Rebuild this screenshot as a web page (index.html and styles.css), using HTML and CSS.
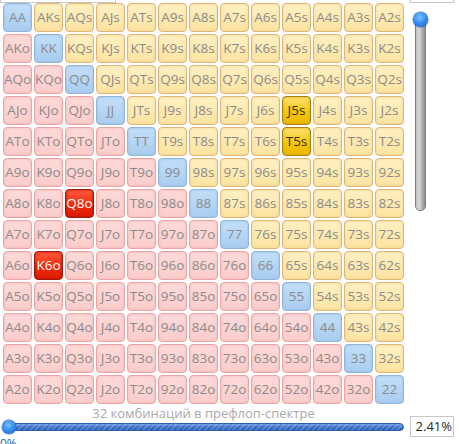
FILE: index.html
```html
<!DOCTYPE html>
<html>
<head>
<meta charset="utf-8">
<link rel="stylesheet" href="styles.css">
</head>
<body>
<div class="page">
  <div class="top">
    <div class="box box-left"></div>
    <div class="box box-right"></div>
  </div>
  <div class="main">
    <div class="grid">
      <div class="cell pair">AA</div><div class="cell suited">AKs</div><div class="cell suited">AQs</div><div class="cell suited">AJs</div><div class="cell suited">ATs</div><div class="cell suited">A9s</div><div class="cell suited">A8s</div><div class="cell suited">A7s</div><div class="cell suited">A6s</div><div class="cell suited">A5s</div><div class="cell suited">A4s</div><div class="cell suited">A3s</div><div class="cell suited">A2s</div>
      <div class="cell offsuit">AKo</div><div class="cell pair">KK</div><div class="cell suited">KQs</div><div class="cell suited">KJs</div><div class="cell suited">KTs</div><div class="cell suited">K9s</div><div class="cell suited">K8s</div><div class="cell suited">K7s</div><div class="cell suited">K6s</div><div class="cell suited">K5s</div><div class="cell suited">K4s</div><div class="cell suited">K3s</div><div class="cell suited">K2s</div>
      <div class="cell offsuit">AQo</div><div class="cell offsuit">KQo</div><div class="cell pair">QQ</div><div class="cell suited">QJs</div><div class="cell suited">QTs</div><div class="cell suited">Q9s</div><div class="cell suited">Q8s</div><div class="cell suited">Q7s</div><div class="cell suited">Q6s</div><div class="cell suited">Q5s</div><div class="cell suited">Q4s</div><div class="cell suited">Q3s</div><div class="cell suited">Q2s</div>
      <div class="cell offsuit">AJo</div><div class="cell offsuit">KJo</div><div class="cell offsuit">QJo</div><div class="cell pair">JJ</div><div class="cell suited">JTs</div><div class="cell suited">J9s</div><div class="cell suited">J8s</div><div class="cell suited">J7s</div><div class="cell suited">J6s</div><div class="cell suited-sel">J5s</div><div class="cell suited">J4s</div><div class="cell suited">J3s</div><div class="cell suited">J2s</div>
      <div class="cell offsuit">ATo</div><div class="cell offsuit">KTo</div><div class="cell offsuit">QTo</div><div class="cell offsuit">JTo</div><div class="cell pair">TT</div><div class="cell suited">T9s</div><div class="cell suited">T8s</div><div class="cell suited">T7s</div><div class="cell suited">T6s</div><div class="cell suited-sel">T5s</div><div class="cell suited">T4s</div><div class="cell suited">T3s</div><div class="cell suited">T2s</div>
      <div class="cell offsuit">A9o</div><div class="cell offsuit">K9o</div><div class="cell offsuit">Q9o</div><div class="cell offsuit">J9o</div><div class="cell offsuit">T9o</div><div class="cell pair">99</div><div class="cell suited">98s</div><div class="cell suited">97s</div><div class="cell suited">96s</div><div class="cell suited">95s</div><div class="cell suited">94s</div><div class="cell suited">93s</div><div class="cell suited">92s</div>
      <div class="cell offsuit">A8o</div><div class="cell offsuit">K8o</div><div class="cell offsuit-sel">Q8o</div><div class="cell offsuit">J8o</div><div class="cell offsuit">T8o</div><div class="cell offsuit">98o</div><div class="cell pair">88</div><div class="cell suited">87s</div><div class="cell suited">86s</div><div class="cell suited">85s</div><div class="cell suited">84s</div><div class="cell suited">83s</div><div class="cell suited">82s</div>
      <div class="cell offsuit">A7o</div><div class="cell offsuit">K7o</div><div class="cell offsuit">Q7o</div><div class="cell offsuit">J7o</div><div class="cell offsuit">T7o</div><div class="cell offsuit">97o</div><div class="cell offsuit">87o</div><div class="cell pair">77</div><div class="cell suited">76s</div><div class="cell suited">75s</div><div class="cell suited">74s</div><div class="cell suited">73s</div><div class="cell suited">72s</div>
      <div class="cell offsuit">A6o</div><div class="cell offsuit-sel">K6o</div><div class="cell offsuit">Q6o</div><div class="cell offsuit">J6o</div><div class="cell offsuit">T6o</div><div class="cell offsuit">96o</div><div class="cell offsuit">86o</div><div class="cell offsuit">76o</div><div class="cell pair">66</div><div class="cell suited">65s</div><div class="cell suited">64s</div><div class="cell suited">63s</div><div class="cell suited">62s</div>
      <div class="cell offsuit">A5o</div><div class="cell offsuit">K5o</div><div class="cell offsuit">Q5o</div><div class="cell offsuit">J5o</div><div class="cell offsuit">T5o</div><div class="cell offsuit">95o</div><div class="cell offsuit">85o</div><div class="cell offsuit">75o</div><div class="cell offsuit">65o</div><div class="cell pair">55</div><div class="cell suited">54s</div><div class="cell suited">53s</div><div class="cell suited">52s</div>
      <div class="cell offsuit">A4o</div><div class="cell offsuit">K4o</div><div class="cell offsuit">Q4o</div><div class="cell offsuit">J4o</div><div class="cell offsuit">T4o</div><div class="cell offsuit">94o</div><div class="cell offsuit">84o</div><div class="cell offsuit">74o</div><div class="cell offsuit">64o</div><div class="cell offsuit">54o</div><div class="cell pair">44</div><div class="cell suited">43s</div><div class="cell suited">42s</div>
      <div class="cell offsuit">A3o</div><div class="cell offsuit">K3o</div><div class="cell offsuit">Q3o</div><div class="cell offsuit">J3o</div><div class="cell offsuit">T3o</div><div class="cell offsuit">93o</div><div class="cell offsuit">83o</div><div class="cell offsuit">73o</div><div class="cell offsuit">63o</div><div class="cell offsuit">53o</div><div class="cell offsuit">43o</div><div class="cell pair">33</div><div class="cell suited">32s</div>
      <div class="cell offsuit">A2o</div><div class="cell offsuit">K2o</div><div class="cell offsuit">Q2o</div><div class="cell offsuit">J2o</div><div class="cell offsuit">T2o</div><div class="cell offsuit">92o</div><div class="cell offsuit">82o</div><div class="cell offsuit">72o</div><div class="cell offsuit">62o</div><div class="cell offsuit">52o</div><div class="cell offsuit">42o</div><div class="cell offsuit">32o</div><div class="cell pair">22</div>
    </div>
    <div class="vslider">
      <div class="vtrack"></div>
      <div class="vthumb"></div>
    </div>
  </div>
  <div class="bottom">
    <div class="bottom-left">
      <div class="caption">32 комбинаций в префлоп-спектре</div>
      <div class="hslider">
        <div class="htrack"></div>
        <div class="hthumb"></div>
      </div>
    </div>
    <div class="pct">2.41%</div>
  </div>
  <div class="zero">0%</div>
</div>
</body>
</html>
```
FILE: styles.css
```css
html, body {
  margin: 0;
  padding: 0;
  background: #ffffff;
  overflow: hidden;
}
.page {
  width: 459px;
  height: 444px;
  font-family: "Open Sans", "Noto Sans", sans-serif;
  display: flex;
  flex-direction: column;
}
.top {
  display: flex;
  height: 3px;
}
.box {
  box-sizing: border-box;
  height: 3px;
  border: 1px solid #c6c6c6;
  border-top: none;
  background: #fff;
}
.box-left {
  width: 116px;
}
.box-right {
  width: 44px;
  margin-left: 294px;
}
.main {
  display: flex;
  padding-left: 3px;
}
.grid {
  display: grid;
  grid-template-columns: repeat(13, 29px);
  grid-auto-rows: 29px;
  gap: 2px;
}
.cell {
  box-sizing: border-box;
  border-radius: 4px;
  border: 1px solid;
  font-size: 13.5px;
  line-height: 27px;
  text-align: center;
  color: #8b8b8b;
  white-space: nowrap;
}
.pair {
  background: linear-gradient(#c2dff8, #a9cdf0);
  border-color: #91b4d9;
  box-shadow: inset 0 0 3px #9cc2e8;
}
.suited {
  background: linear-gradient(#fff1c4, #fce3a0);
  border-color: #e0b57a;
  box-shadow: inset 0 0 3px #f3d48e;
}
.offsuit {
  background: linear-gradient(#fddad8, #fbcdcb);
  border-color: #eaa4a4;
  box-shadow: inset 0 0 3px #f3b8b8;
}
.suited-sel {
  background: linear-gradient(#fce372, #f3c40a 60%, #eab800);
  border-color: #a5820d;
  color: #3b3200;
  box-shadow: inset 0 0 3px #d9a800;
}
.offsuit-sel {
  background: linear-gradient(#ff5b3e, #ef2a0c 55%, #de1c00);
  border-color: #9b1810;
  color: #ffffff;
  box-shadow: inset 0 0 3px #c01000;
}
.vslider {
  position: relative;
  width: 16px;
  margin-left: 8px;
}
.vtrack {
  box-sizing: border-box;
  margin-top: 17px;
  margin-left: 3px;
  width: 11px;
  height: 191px;
  border: 1px solid #7d7d7d;
  border-radius: 0 0 5px 5px;
  background: linear-gradient(to right, #bfbfbf, #d8d8d8 35%, #a8a8a8 75%, #8e8e8e);
}
.vthumb {
  position: absolute;
  left: 1px;
  top: 9px;
  width: 15px;
  height: 15px;
  border-radius: 50%;
  background: radial-gradient(circle at 45% 35%, #7cc0ff, #2f86ea 55%, #1a62c8);
  box-shadow: 0 0 0 0.5px #1d5fb8;
}
.bottom {
  display: flex;
}
.bottom-left {
  width: 405px;
  display: flex;
  flex-direction: column;
}
.caption {
  margin-top: 2px;
  margin-left: 3px;
  width: 401px;
  height: 14px;
  line-height: 14px;
  font-size: 13px;
  color: #a9a9a9;
  text-align: center;
}
.hslider {
  position: relative;
  height: 14px;
}
.htrack {
  box-sizing: border-box;
  position: absolute;
  left: 5px;
  top: 3px;
  width: 399px;
  height: 8px;
  border-radius: 4px;
  border: 1px solid #2c5fb0;
  background:
    repeating-linear-gradient(135deg, rgba(255,255,255,0.18) 0 2px, rgba(255,255,255,0) 2px 4px),
    linear-gradient(#6d9be0, #3b6fc6 50%, #2e5eb4);
}
.hthumb {
  position: absolute;
  left: 2px;
  top: 0;
  width: 14px;
  height: 14px;
  border-radius: 50%;
  background: radial-gradient(circle at 45% 35%, #7cc0ff, #2f86ea 55%, #1a62c8);
  box-shadow: 0 0 0 0.5px #1d5fb8;
}
.pct {
  box-sizing: border-box;
  margin-left: 5px;
  margin-top: 12px;
  width: 44px;
  height: 21px;
  border: 1px solid #c6c6c6;
  background: #fff;
  font-size: 13px;
  line-height: 19px;
  text-align: right;
  padding-right: 1px;
  color: #2a2a2a;
}
.zero {
  margin-top: 0;
  font-size: 12px;
  line-height: 14px;
  color: #2f5ea8;
}
```
